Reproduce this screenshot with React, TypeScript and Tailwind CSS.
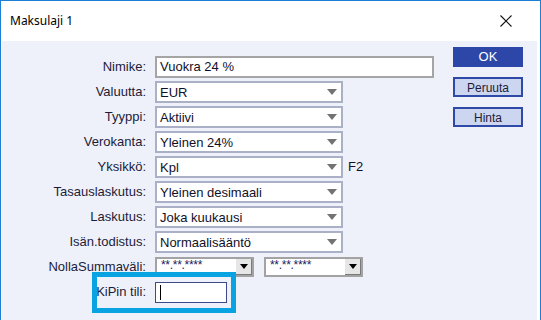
import React from "react";

const labelFont = { fontFamily: '"Liberation Sans", Arial, sans-serif' };

const Arrow = () => (
  <svg width="10" height="6" viewBox="0 0 10 6" className="shrink-0">
    <path d="M0 0h10L5 6z" fill="#737373" />
  </svg>
);

const Select = ({ value }: { value: string }) => (
  <div className="flex h-[22px] w-[188px] items-center justify-between border-2 border-[#aab1c6] bg-white pl-[3px] pr-[4px]">
    <span className="text-[13px] leading-none text-[#101028]">{value}</span>
    <Arrow />
  </div>
);

const DateField = () => (
  <div className="flex h-[20px] w-[99px] items-center justify-between border-2 border-[#a3a3a3] bg-white pl-[4px]">
    <span className="-mt-[4px] text-[12px] leading-none tracking-[-0.3px] text-[#202060]">**.**.****</span>
    <div className="flex h-[16px] w-[16px] items-center justify-center border-r border-b border-[#7a7a7a] bg-[#e6e6e6]">
      <svg width="8" height="5" viewBox="0 0 8 5">
        <path d="M0 0h8L4 5z" fill="#000" />
      </svg>
    </div>
  </div>
);

const Row = ({ label, children }: { label: string; children: React.ReactNode }) => (
  <div className="flex h-[22px] items-center">
    <div className="w-[145px] pr-[1px] text-right text-[13px] text-[#1c1c3a]">{label}</div>
    <div className="ml-[8px] flex items-center">{children}</div>
  </div>
);

export default function App() {
  const rows: [string, string][] = [
    ["Valuutta:", "EUR"],
    ["Tyyppi:", "Aktiivi"],
    ["Verokanta:", "Yleinen 24%"],
  ];

  return (
    <div className="h-[320px] w-[541px] overflow-hidden border-t border-x border-[#1c7fd6] bg-white" style={labelFont}>
      {/* Title bar */}
      <div className="flex h-[40px] items-center justify-between pl-[9px] pr-[28px]">
        <span className="text-[12px] text-black" style={{ fontFamily: '"Segoe UI", "Noto Sans", sans-serif' }}>
          Maksulaji 1
        </span>
        <svg width="12" height="12" viewBox="0 0 12 12">
          <path d="M0.5 0.5L11.5 11.5M11.5 0.5L0.5 11.5" stroke="#111" strokeWidth="1.1" />
        </svg>
      </div>

      {/* Body */}
      <div className="relative ml-[1px] mr-[3px] flex h-[280px] bg-[#eef1f9]">
        <div className="flex flex-col gap-[3px] pt-[15px]">
          <Row label="Nimike:">
            <div className="flex h-[22px] w-[279px] items-center border-2 border-[#a5a5a5] bg-white pl-[3px] text-[13px] text-[#101028]">
              Vuokra 24 %
            </div>
          </Row>
          {rows.map(([l, v]) => (
            <Row key={l} label={l}>
              <Select value={v} />
            </Row>
          ))}
          <Row label="Yksikkö:">
            <Select value="Kpl" />
            <span className="ml-[5px] text-[13px] text-[#101028]">F2</span>
          </Row>
          <Row label="Tasauslaskutus:">
            <Select value="Yleinen desimaali" />
          </Row>
          <Row label="Laskutus:">
            <Select value="Joka kuukausi" />
          </Row>
          <Row label="Isän.todistus:">
            <Select value="Normaalisääntö" />
          </Row>
          <Row label="NollaSummaväli:">
            <DateField />
            <div className="ml-[10px]">
              <DateField />
            </div>
          </Row>
          <Row label="KiPin tili:">
            <div className="flex h-[21px] w-[72px] items-center border border-[#3a4a8c] bg-white pl-[4px]">
              <div className="h-[15px] w-[1px] bg-black" />
            </div>
          </Row>
        </div>

        {/* Buttons */}
        <div className="ml-[19px] flex flex-col gap-[10px] pt-[6px]">
          <button className="h-[20px] w-[70px] bg-[#2c47a8] text-[13px] text-white">OK</button>
          <button className="h-[20px] w-[70px] border-2 border-[#2f49a6] bg-[#cdd6f0] text-[12px] text-[#1c1c3a]">
            Peruuta
          </button>
          <button className="h-[20px] w-[70px] border-2 border-[#2f49a6] bg-[#cdd6f0] text-[12px] text-[#1c1c3a]">
            Hinta
          </button>
        </div>

        {/* Highlight frame */}
        <div className="absolute left-[90px] top-[231px] h-[41px] w-[144px] border-[5px] border-[#0aa3e2]" />
      </div>
    </div>
  );
}
